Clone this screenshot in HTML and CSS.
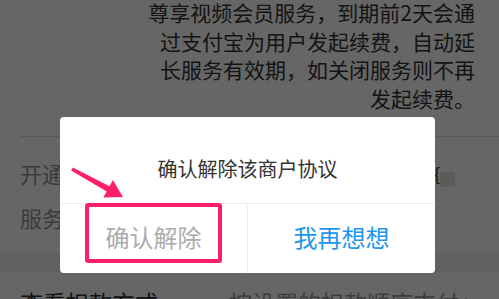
FILE: index.html
```html
<!DOCTYPE html>
<html lang="zh-CN">
<head>
  <meta charset="UTF-8" />
  <meta name="viewport" content="width=device-width, initial-scale=1.0"/>
  <title>解除商户协议</title>
  <link rel="stylesheet" href="styles.css">
</head>
<body>

  <div class="page">
    <div class="desc">
      尊享视频会员服务，到期前2天会通<br>
      过支付宝为用户发起续费，自动延<br>
      长服务有效期，如关闭服务则不再<br>
      发起续费。
    </div>

    <div class="group">
      <div class="row">
        <span class="label">开通时间</span>
        <span class="value">{<i class="mask"></i></span>
      </div>
      <div class="row">
        <span class="label">服务到期</span>
      </div>
    </div>

    <div class="gap"></div>

    <div class="row row-link">
      <span class="link-title">查看扣款方式</span>
      <span class="link-value">按设置的扣款顺序支付 &gt;</span>
    </div>
  </div>

  <div class="overlay">
    <div class="dialog">
      <div class="dialog-title">确认解除该商户协议</div>
      <div class="dialog-actions">
        <div class="btn btn-confirm">确认解除</div>
        <div class="btn btn-cancel">我再想想</div>
      </div>
      <div class="mark"></div>
    </div>

    <svg class="arrow" width="62" height="42" viewBox="0 0 62 42">
      <polygon fill="#ff1f66" points="6.9,7.4 43.5,26.2 46.9,20 57,37 37.3,37.6 40.7,31.4 5.1,10.6"/>
    </svg>
  </div>

</body>
</html>
```

FILE: styles.css
```css
* {
  margin: 0;
  padding: 0;
  box-sizing: border-box;
}

body {
  width: 499px;
  height: 299px;
  overflow: hidden;
  background-color: #ffffff;
  font-family: "Noto Sans CJK SC", "Noto Sans", sans-serif;
}

.page {
  display: flex;
  flex-direction: column;
}

.desc {
  margin: -2px 0 0 20px;
  padding: 0 24px 0 120px;
  height: 139px;
  text-align: right;
  font-size: 21px;
  line-height: 28.7px;
  color: #333;
  border-bottom: 1px solid #ddd;
}

.group {
  padding: 14px 0;
}

.row {
  display: flex;
  align-items: center;
  justify-content: space-between;
  height: 44px;
  padding: 0 44px 0 20px;
}

.label {
  font-size: 22px;
  color: #959595;
}

.value {
  display: flex;
  align-items: center;
  font-size: 18px;
  color: #333;
  line-height: 1;
}

.mask {
  display: block;
  width: 15px;
  height: 15px;
  margin-top: 12px;
  background-color: #e4e4e4;
}

.gap {
  height: 19px;
  background-color: #f3f3f3;
}

.row-link {
  height: 60px;
  padding-right: 22px;
}

.link-title {
  font-size: 23px;
  color: #333;
}

.link-value {
  font-size: 23px;
  color: #999;
}

.overlay {
  position: fixed;
  top: 0;
  left: 0;
  width: 100%;
  height: 100%;
  background-color: rgba(0, 0, 0, 0.6);
  padding: 117px 0 0 60px;
}

.dialog {
  position: relative;
  width: 375px;
  background-color: #fff;
  border-radius: 4px;
}

.dialog-title {
  padding: 38px 0 20px;
  line-height: 28px;
  font-size: 20px;
  color: #333;
  text-align: center;
  border-bottom: 1px solid #efefef;
}

.dialog-actions {
  display: flex;
  height: 69px;
}

.btn {
  flex: 1;
  display: flex;
  align-items: center;
  justify-content: center;
  padding-bottom: 4px;
  font-size: 24px;
}

.btn-confirm {
  color: #ababab;
  border-right: 1px solid #efefef;
}

.btn-cancel {
  color: #1e96eb;
}

/* annotation box over the confirm button */
.mark {
  position: absolute;
  left: 25px;
  top: 86px;
  width: 137px;
  height: 60px;
  border: 4px solid #ff1f66;
  border-radius: 3px;
}

.arrow {
  position: absolute;
  left: 66px;
  top: 160px;
}
```
